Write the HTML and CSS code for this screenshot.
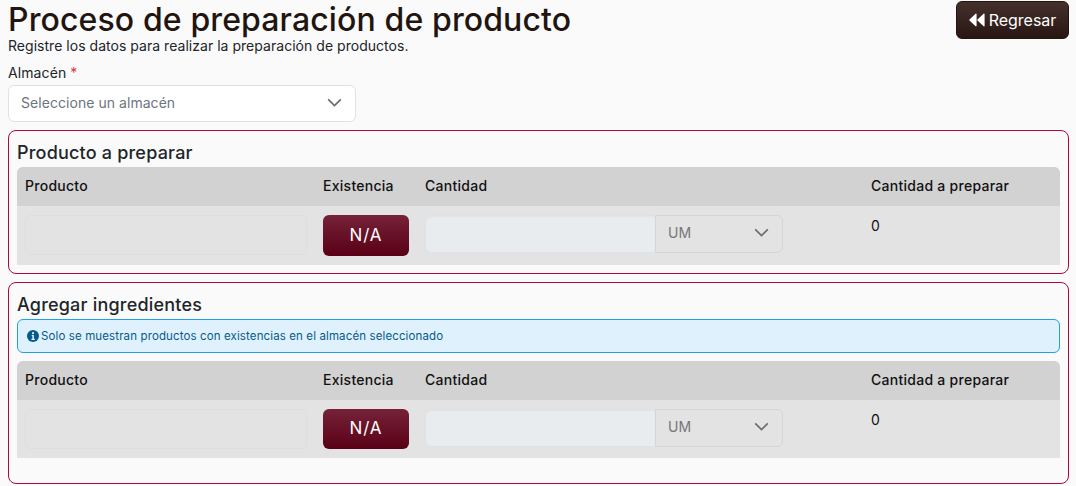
FILE: index.html
```html
<!DOCTYPE html>
<html lang="es">
<head>
    <meta charset="UTF-8">
    <meta name="viewport" content="width=device-width, initial-scale=1.0">
    <title>Proceso de preparación de producto</title>
    <link rel="stylesheet" href="styles.css">
</head>
<body>
    <div class="page-header">
        <div>
            <h1>Proceso de preparación de producto</h1>
            <p class="subtitle">Registre los datos para realizar la preparación de productos.</p>
        </div>
        <button type="button" class="btn-back">
            <svg class="icon-back" viewBox="0 0 16 14" aria-hidden="true"><path d="M7.6 1.2v11.6c0 .6-.6.8-1 .5L.5 7.6a.8.8 0 0 1 0-1.2L6.6.7c.4-.3 1-.1 1 .5zM15.6 1.2v11.6c0 .6-.6.8-1 .5L8.5 7.6a.8.8 0 0 1 0-1.2L14.6.7c.4-.3 1-.1 1 .5z"/></svg>
            Regresar
        </button>
    </div>

    <div class="field-group">
        <label class="field-label">Almacén <span class="required">*</span></label>
        <div class="select-box">
            <span>Seleccione un almacén</span>
            <svg class="chevron" viewBox="0 0 16 10" aria-hidden="true"><path d="M1 1.5l7 7 7-7"/></svg>
        </div>
    </div>

    <section class="card">
        <h2>Producto a preparar</h2>
        <table class="items">
            <thead>
                <tr>
                    <th class="col-product">Producto</th>
                    <th class="col-stock">Existencia</th>
                    <th class="col-qty">Cantidad</th>
                    <th>Cantidad a preparar</th>
                </tr>
            </thead>
            <tbody>
                <tr>
                    <td><div class="input-disabled"></div></td>
                    <td><div class="badge-stock">N/A</div></td>
                    <td>
                        <div class="input-group">
                            <div class="qty-input"></div>
                            <div class="unit-select">
                                <span>UM</span>
                                <svg class="chevron" viewBox="0 0 16 10" aria-hidden="true"><path d="M1 1.5l7 7 7-7"/></svg>
                            </div>
                        </div>
                    </td>
                    <td class="total">0</td>
                </tr>
            </tbody>
        </table>
    </section>

    <section class="card card-last">
        <h2>Agregar ingredientes</h2>
        <div class="alert-info">
            <svg class="icon-info" viewBox="0 0 16 16" aria-hidden="true"><circle cx="8" cy="8" r="8"/><circle cx="8" cy="4.2" r="1.4" fill="#dff1fd"/><path d="M6.3 6.8h2.9v5h1.2v1.4H5.9v-1.4h1.3V8.2h-.9z" fill="#dff1fd"/></svg>
            Solo se muestran productos con existencias en el almacén seleccionado
        </div>
        <table class="items">
            <thead>
                <tr>
                    <th class="col-product">Producto</th>
                    <th class="col-stock">Existencia</th>
                    <th class="col-qty">Cantidad</th>
                    <th>Cantidad a preparar</th>
                </tr>
            </thead>
            <tbody>
                <tr>
                    <td><div class="input-disabled"></div></td>
                    <td><div class="badge-stock">N/A</div></td>
                    <td>
                        <div class="input-group">
                            <div class="qty-input"></div>
                            <div class="unit-select">
                                <span>UM</span>
                                <svg class="chevron" viewBox="0 0 16 10" aria-hidden="true"><path d="M1 1.5l7 7 7-7"/></svg>
                            </div>
                        </div>
                    </td>
                    <td class="total">0</td>
                </tr>
            </tbody>
        </table>
    </section>
</body>
</html>
```

FILE: styles.css
```css
body {
    font-family: Inter, "Noto Sans", sans-serif;
    background-color: #fafafa;
    color: #212529;
    margin: 0;
    padding: 0 7px 0 8px;
    font-size: 14px;
}
.page-header {
    display: flex;
    justify-content: space-between;
    align-items: flex-start;
}
h1 {
    margin: 0;
    font-size: 32px;
    font-weight: 500;
    line-height: 39px;
    letter-spacing: .12px;
    color: #221510;
}
.subtitle {
    margin: 0;
    font-size: 14px;
    line-height: 14px;
    letter-spacing: .03px;
}
.btn-back {
    display: flex;
    align-items: center;
    gap: 4px;
    margin-top: 1px;
    height: 38px;
    width: 113px;
    justify-content: center;
    padding: 0;
    font: inherit;
    font-size: 16px;
    color: #fff;
    background: linear-gradient(#45302c, #281612);
    border: 1px solid #221510;
    border-radius: 6px;
}
.icon-back {
    width: 16px;
    height: 14px;
    fill: #fff;
}
.field-group {
    margin-top: 10px;
}
.field-label {
    display: block;
    line-height: 20px;
    letter-spacing: .1px;
}
.required {
    color: #dc3545;
}
.select-box {
    display: flex;
    justify-content: space-between;
    align-items: center;
    box-sizing: border-box;
    width: 348px;
    height: 37px;
    margin-top: 2px;
    padding: 0 13px 2px 12px;
    background-color: #fff;
    border: 1px solid #dee2e6;
    border-radius: 6px;
    color: #6c757d;
    letter-spacing: .05px;
}
.chevron {
    width: 15px;
    height: 9px;
    fill: none;
    stroke: #6b6b6b;
    stroke-width: 1.8;
}
.card {
    margin-top: 8px;
    padding: 8px;
    border: 1px solid #b0063f;
    border-radius: 8px;
}
.card-last {
    padding-bottom: 25px;
}
h2 {
    margin: 2px 0;
    font-size: 18px;
    font-weight: 500;
    line-height: 24px;
    letter-spacing: .2px;
}
.items {
    width: 100%;
    table-layout: fixed;
    border-collapse: separate;
    border-spacing: 0;
    background-color: #e3e3e3;
    border-radius: 6px 6px 0 0;
    color: #111;
}
.items th {
    height: 39px;
    box-sizing: border-box;
    padding: 0 8px 2px;
    text-align: left;
    font-weight: 500;
    letter-spacing: .27px;
    background-color: #d2d2d2;
}
.items th:first-child {
    border-top-left-radius: 6px;
}
.items th:last-child {
    border-top-right-radius: 6px;
}
.items td {
    padding: 9px 8px 9px;
    vertical-align: top;
}
.items td.total {
    padding-top: 10px;
}
.card-last .badge-stock {
    height: 40px;
    line-height: 39px;
}
.col-product {
    width: 298px;
}
.col-stock {
    width: 102px;
}
.col-qty {
    width: 446px;
}
.input-disabled {
    box-sizing: border-box;
    height: 40px;
    border: 1px solid #dedede;
    border-radius: 6px;
}
.badge-stock {
    height: 41px;
    line-height: 41px;
    text-align: center;
    font-size: 17px;
    font-weight: 400;
    letter-spacing: .9px;
    color: #fff;
    background: linear-gradient(#752238, #5a0016);
    border-radius: 6px;
}
.input-group {
    display: flex;
    width: 358px;
    height: 38px;
}
.qty-input {
    flex: 1;
    background-color: #e9ecef;
    border: 1px solid #dee2e6;
    border-right: none;
    border-radius: 6px 0 0 6px;
    box-shadow: inset 0 1px 2px rgba(0, 0, 0, .04);
}
.unit-select {
    display: flex;
    justify-content: space-between;
    align-items: center;
    box-sizing: border-box;
    width: 128px;
    padding: 0 13px 3px 12px;
    border: 1px solid #d3d5d7;
    border-radius: 0 6px 6px 0;
    color: #777;
}
.total {
    line-height: 20px;
}
.alert-info {
    display: flex;
    align-items: center;
    gap: 2px;
    box-sizing: border-box;
    height: 34px;
    margin: 0 0 8px;
    padding: 0 9px;
    font-size: 11.5px;
    letter-spacing: .12px;
    color: #055a8c;
    background-color: #dff1fd;
    border: 1px solid #1ea3e0;
    border-radius: 6px;
}
.icon-info {
    width: 12px;
    height: 12px;
    fill: #055a8c;
}
```
